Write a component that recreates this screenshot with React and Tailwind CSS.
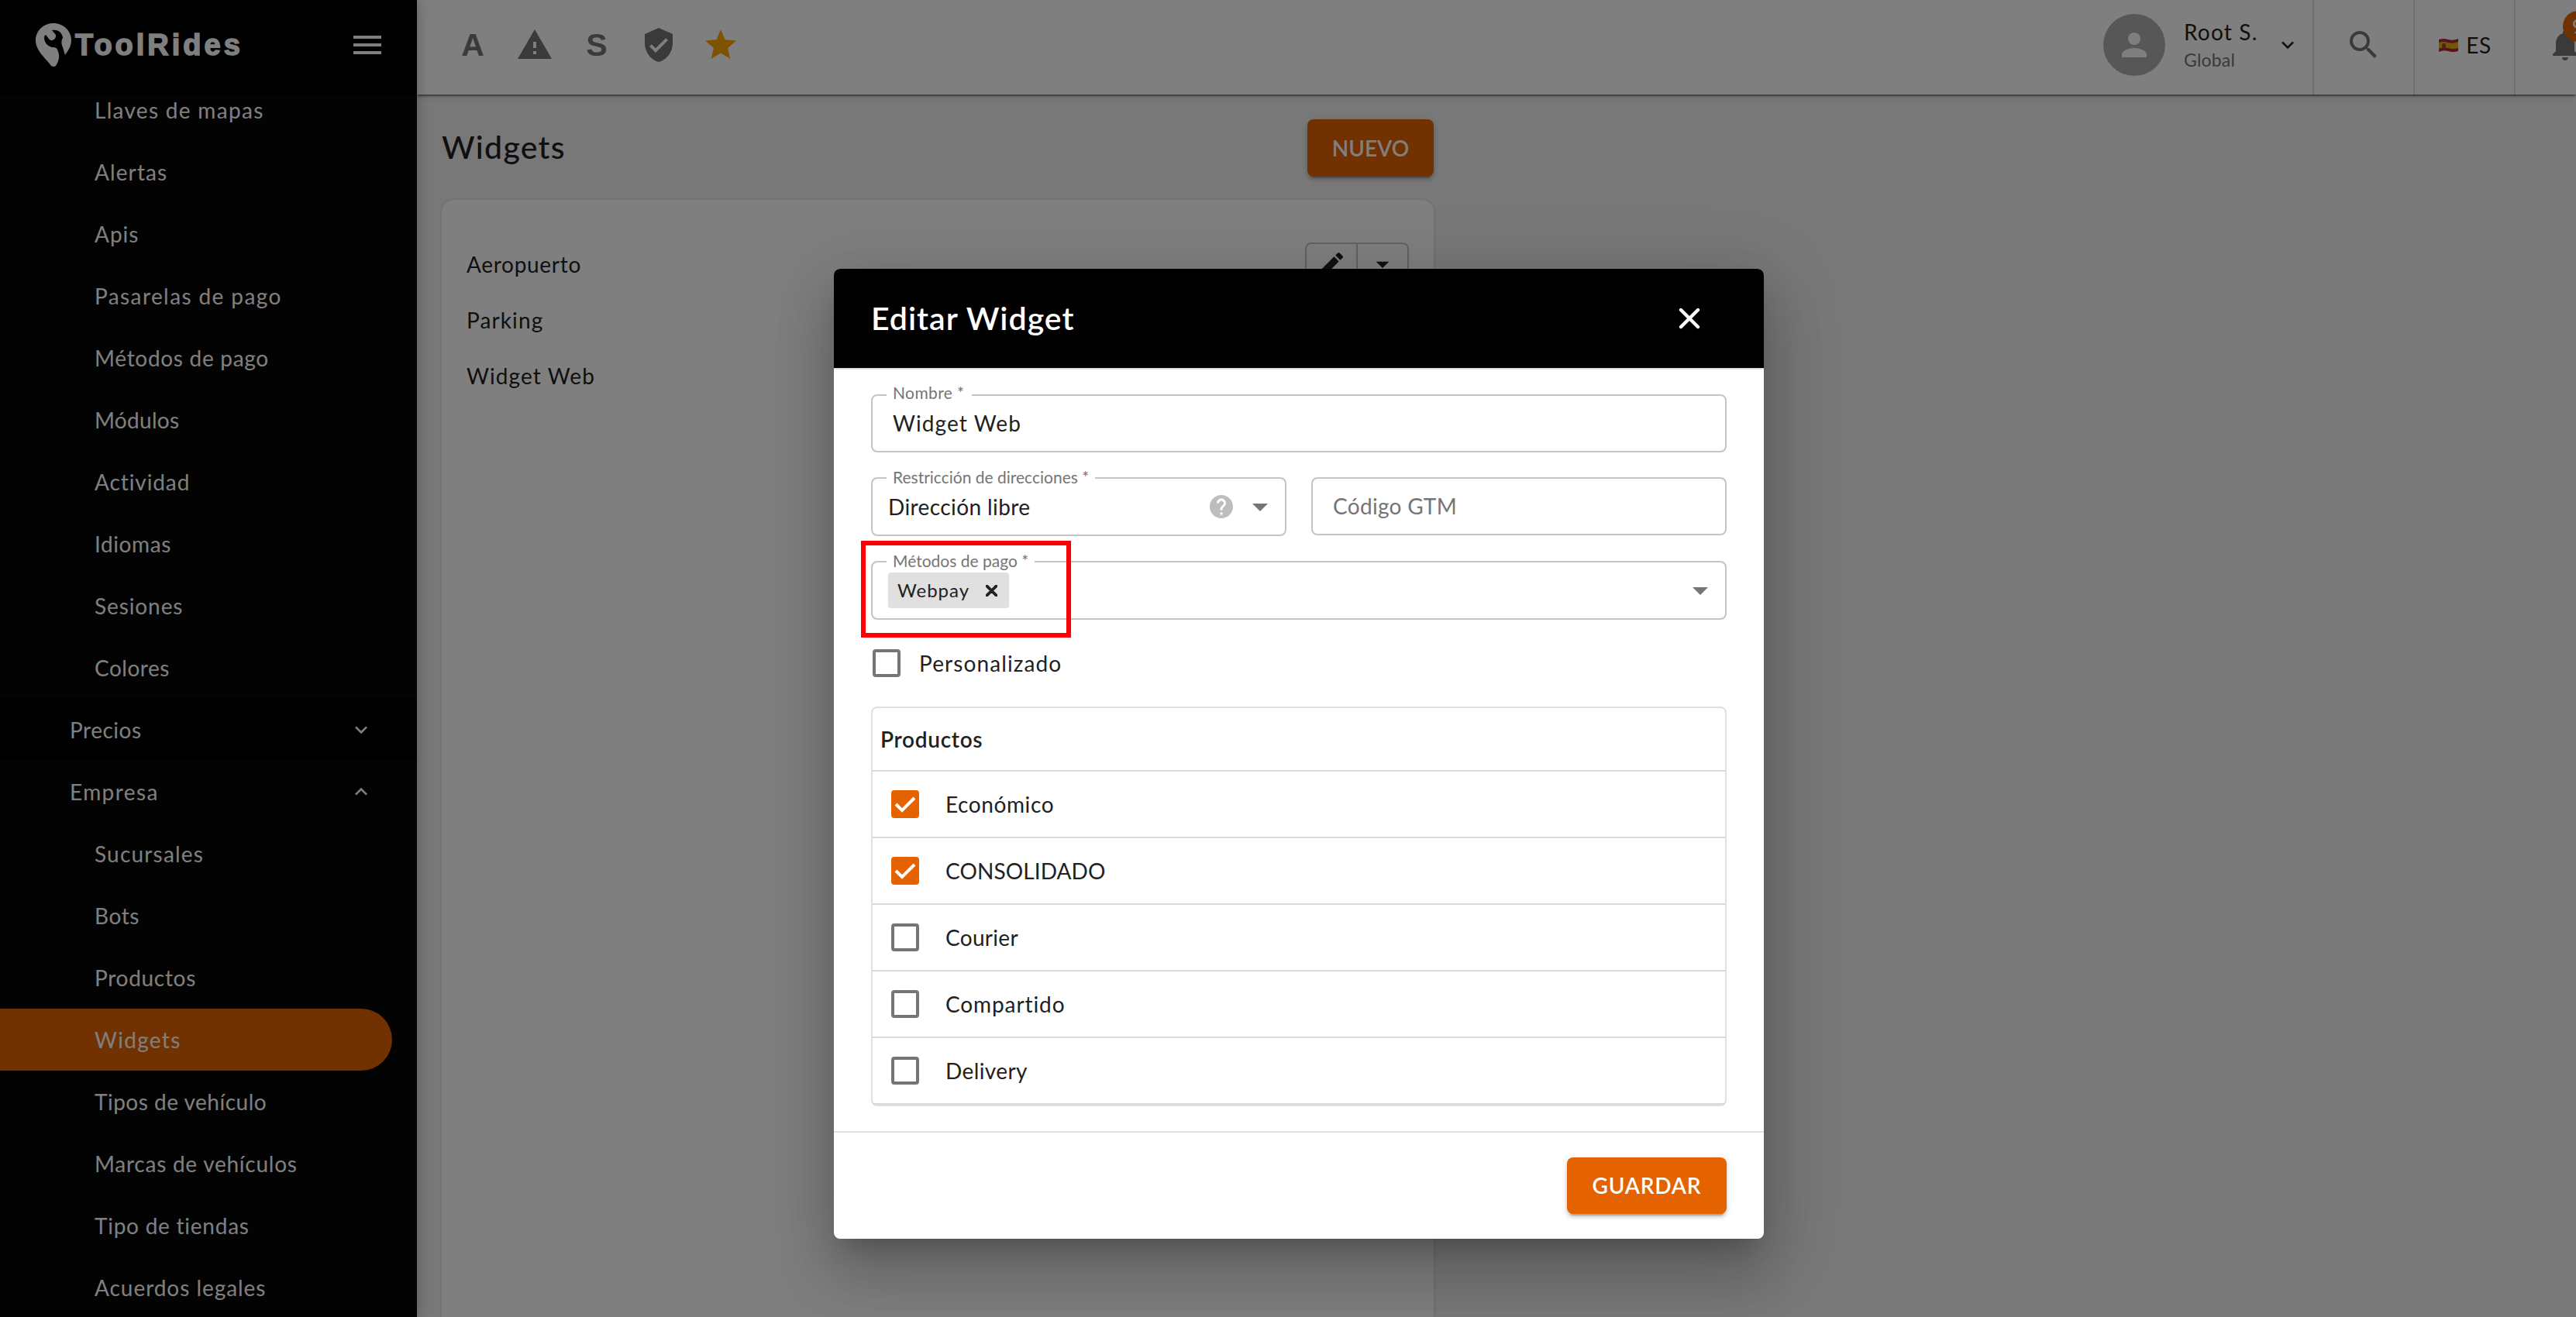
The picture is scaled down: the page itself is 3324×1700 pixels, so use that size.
import { useState } from 'react';
import {
  MdArrowDropDown,
  MdEdit,
  MdExpandLess,
  MdExpandMore,
  MdHelp,
  MdMenu,
  MdNotifications,
  MdPerson,
  MdSearch,
  MdStar,
  MdVerifiedUser,
  MdWarning,
} from 'react-icons/md';

const configItems = [
  { label: 'Llaves de mapas', spacing: 'tracking-[1.3px]' },
  { label: 'Alertas', spacing: 'tracking-[1.1px]' },
  { label: 'Apis', spacing: 'tracking-[1px]' },
  { label: 'Pasarelas de pago', spacing: 'tracking-[1.4px]' },
  { label: 'Métodos de pago', spacing: 'tracking-[0.7px]' },
  { label: 'Módulos', spacing: 'tracking-[0.3px]' },
  { label: 'Actividad', spacing: 'tracking-[0.9px]' },
  { label: 'Idiomas', spacing: 'tracking-[0.6px]' },
  { label: 'Sesiones', spacing: 'tracking-[0.9px]' },
  { label: 'Colores', spacing: 'tracking-[0.5px]' },
];

const companyItems = [
  { label: 'Sucursales', spacing: 'tracking-[1.2px]' },
  { label: 'Bots', spacing: 'tracking-[0.6px]' },
  { label: 'Productos', spacing: 'tracking-[0.7px]' },
  { label: 'Widgets', spacing: 'tracking-[1.3px]' },
  { label: 'Tipos de vehículo', spacing: 'tracking-[0.5px]' },
  { label: 'Marcas de vehículos', spacing: 'tracking-[0.75px]' },
  { label: 'Tipo de tiendas', spacing: 'tracking-[0.75px]' },
  { label: 'Acuerdos legales', spacing: 'tracking-[0.95px]' },
];

const widgets = [
  { name: 'Aeropuerto', spacing: 'tracking-[0.7px]' },
  { name: 'Parking', spacing: 'tracking-[1.1px]' },
  { name: 'Widget Web', spacing: 'tracking-[1.1px]' },
];

const initialProducts = [
  { name: 'Económico', checked: true, spacing: 'tracking-[0.6px]' },
  { name: 'CONSOLIDADO', checked: true, spacing: 'tracking-[0.1px]' },
  { name: 'Courier', checked: false, spacing: 'tracking-[0.3px]' },
  { name: 'Compartido', checked: false, spacing: 'tracking-[0.9px]' },
  { name: 'Delivery', checked: false, spacing: 'tracking-[0.4px]' },
];

function Logo() {
  return (
    <div className="flex items-center gap-[5px] text-white">
      <svg width="46" height="57" viewBox="0 0 46 57" fill="currentColor">
        <path d="M23 0C10 0 0 10 0 22c0 14 14 24 20 33q3 2 6 0c4-6 6-13 2-21-1-3-4-3-7-3-7-2-10-7-10-13 0-2 2-4 3-2l3 4c2 4 10 2 9-5l-5-6c9-2 14 5 14 10-3 5-1 10 0 12 1 3 2 7 3 10 4-6 8-11 8-19C46 10 36 0 23 0Z" />
      </svg>
      <span className="font-['Liberation_Sans'] text-[38px] leading-none font-bold tracking-[4px] [-webkit-text-stroke:1.5px_white]">
        ToolRides
      </span>
    </div>
  );
}

function NavItem({ label, spacing, active }) {
  return (
    <li
      className={`flex h-20 shrink-0 items-center pb-px pl-[122px] ${spacing} ${
        active ? 'mr-8 rounded-r-full bg-[#e46200]' : ''
      }`}
    >
      {label}
    </li>
  );
}

function Sidebar() {
  return (
    <aside className="z-10 flex w-[538px] shrink-0 flex-col bg-[#060606] text-white shadow-[0_0_16px_rgba(0,0,0,0.3)]">
      <div className="z-10 flex h-[122px] shrink-0 items-center justify-between bg-black pr-10 pb-1.5 pl-[46px]">
        <Logo />
        <MdMenu size={48} />
      </div>
      <ul className="-mt-5 flex flex-col text-[28px]">
        {configItems.map((item) => (
          <NavItem key={item.label} {...item} />
        ))}
        <li className="flex h-20 items-center justify-between bg-black pr-14 pl-[90px] tracking-[0.5px]">
          <span className="pb-px">Precios</span>
          <MdExpandMore size={32} />
        </li>
        <li className="flex h-20 items-center justify-between pr-14 pl-[90px] tracking-[1.4px]">
          <span className="pb-px">Empresa</span>
          <MdExpandLess size={32} />
        </li>
        {companyItems.map((item) => (
          <NavItem key={item.label} {...item} active={item.label === 'Widgets'} />
        ))}
      </ul>
    </aside>
  );
}

function SpainFlag() {
  return (
    <svg width="25" height="19" viewBox="0 0 25 19">
      <path d="M0 2q6-2 12 0t13-1v16q-7 2-13 0t-12 1Z" fill="#b0283a" />
      <path d="M0 6q6-2 12 0t13-1v8q-7 2-13 0t-12 1Z" fill="#e6b30c" />
      <rect x="4" y="7" width="5" height="6" rx="2" fill="#a34b2a" />
    </svg>
  );
}

function TopBar() {
  return (
    <header className="z-[5] flex h-[122px] shrink-0 justify-between bg-white text-[#757575] shadow-[0_4px_2px_-2px_rgba(0,0,0,0.3),0_2px_2px_rgba(0,0,0,0.2),0_2px_8px_rgba(0,0,0,0.14)]">
      <div className="flex items-center gap-8 pb-1.5 pl-12">
        <span className="w-12 text-center font-['Liberation_Sans'] text-[41px] leading-none font-bold">A</span>
        <MdWarning size={48} />
        <span className="w-12 text-center font-['Liberation_Sans'] text-[41px] leading-none font-bold">S</span>
        <MdVerifiedUser size={48} />
        <MdStar size={48} className="text-[#ffa400]" />
      </div>

      <div className="flex">
        <div className="flex items-center pr-4 pb-1.5">
          <div className="flex size-20 items-center justify-center rounded-full bg-[#afafaf] text-white">
            <MdPerson size={48} />
          </div>
          <div className="ml-6 flex w-[118px] flex-col">
            <span className="text-[28px] leading-[38px] tracking-[1.2px] text-[#212121]">Root S.</span>
            <span className="text-[23px] leading-[34px] tracking-[0.2px]">Global</span>
          </div>
          <MdExpandMore size={32} className="text-[#212121]" />
        </div>
        <div className="flex w-[130px] items-center justify-center border-l-2 border-[#e0e0e0] pb-1.5">
          <MdSearch size={48} />
        </div>
        <div className="flex w-[130px] items-center justify-center gap-2.5 border-l-2 border-[#e0e0e0] pb-1.5 pl-0.5 text-[28px] tracking-[0.5px] text-[#212121]">
          <SpainFlag />
          <span className="pb-px">ES</span>
        </div>
        <div className="w-20 overflow-hidden border-l-2 border-[#e0e0e0] pt-[34px] pl-10">
          <div className="relative size-12">
            <MdNotifications size={48} />
            <span className="absolute -top-5 left-[21px] flex h-10 items-center rounded-full bg-[#e46200] px-3 text-[24px] font-semibold text-white">
              99
            </span>
          </div>
        </div>
      </div>
    </header>
  );
}

function WidgetsPage() {
  return (
    <main className="flex w-[1312px] grow flex-col pt-8 pl-8">
      <div className="flex items-center justify-between">
        <h1 className="pb-0.5 text-[41px] font-medium tracking-[1.3px] text-[#212121]">Widgets</h1>
        <button className="h-[74px] w-[163px] rounded-lg bg-[#e46200] pb-px text-[28px] font-semibold text-white shadow-[0_6px_2px_-4px_rgba(0,0,0,0.2),0_4px_4px_rgba(0,0,0,0.14),0_2px_10px_rgba(0,0,0,0.12)]">
          NUEVO
        </button>
      </div>
      <div className="mt-[30px] grow rounded-t-2xl bg-white px-8 pt-[47px] shadow-[0_0_4px_rgba(0,0,0,0.15)]">
        {widgets.map(({ name, spacing }) => (
          <div key={name} className="flex h-[72px] items-center justify-between text-[28px] text-[#212121]">
            <span className={spacing}>{name}</span>
            <div className="flex h-[56px] w-[134px] rounded-lg border-2 border-[#c4c4c4]">
              <span className="flex grow basis-0 items-center justify-center border-r-2 border-[#c4c4c4]">
                <MdEdit size={40} />
              </span>
              <span className="flex grow basis-0 items-center justify-center">
                <MdArrowDropDown size={40} />
              </span>
            </div>
          </div>
        ))}
      </div>
    </main>
  );
}

function Checkbox({ checked, onChange }) {
  return (
    <button
      type="button"
      onClick={onChange}
      className={`flex size-9 items-center justify-center rounded-[4px] ${
        checked ? 'bg-[#e46200]' : 'border-4 border-[#757575]'
      }`}
    >
      {checked && (
        <svg width="28" height="22" viewBox="0 0 28 22" fill="none" stroke="white" strokeWidth="4">
          <path d="M2 11l8 8L26 3" />
        </svg>
      )}
    </button>
  );
}

function Outlined({ label, labelClass = '-top-4', className, children }) {
  return (
    <div className={`relative flex items-center rounded-lg border-2 border-[#c4c4c4] text-[28px] text-[#212121] ${className}`}>
      {label && (
        <span className={`absolute left-[18px] bg-white px-2 text-[21px] leading-7 text-[#757575] ${labelClass}`}>
          {label}
        </span>
      )}
      {children}
    </div>
  );
}

function CloseIcon({ size, stroke }) {
  return (
    <svg width={size} height={size} viewBox="0 0 28 28" fill="none" stroke="currentColor" strokeWidth={stroke} strokeLinecap="round">
      <path d="M3 3l22 22M25 3L3 25" />
    </svg>
  );
}

function EditWidgetModal() {
  const [products, setProducts] = useState(initialProducts);
  const [custom, setCustom] = useState(false);

  const toggle = (name) =>
    setProducts(products.map((p) => (p.name === name ? { ...p, checked: !p.checked } : p)));

  return (
    <div className="w-[1200px] overflow-hidden rounded-lg bg-white shadow-[0_22px_30px_-14px_rgba(0,0,0,0.2),0_48px_76px_6px_rgba(0,0,0,0.14),0_18px_92px_16px_rgba(0,0,0,0.12)]">
      {/* Header */}
      <div className="flex h-[130px] items-center justify-between border-b-2 border-[#e0e0e0] bg-black pr-[82px] pl-12 text-white">
        <h2 className="text-[41px] font-semibold tracking-[1px]">Editar Widget</h2>
        <CloseIcon size={28} stroke={4.4} />
      </div>

      {/* Form */}
      <div className="flex flex-col gap-8 px-12 py-8">
        <Outlined label="Nombre *" labelClass="-top-[18px] pr-2.5 tracking-[0.4px]" className="h-[75px] pb-px pl-[26px] tracking-[1.1px]">
          Widget Web
        </Outlined>

        <div className="flex items-start gap-8">
          <Outlined label="Restricción de direcciones *" className="h-[76px] w-[536px] justify-between pr-2 pl-5">
            <span className="pb-px tracking-[0.4px]">Dirección libre</span>
            <span className="flex items-center gap-2">
              <MdHelp size={36} className="text-[#bdbdbd]" />
              <MdArrowDropDown size={48} className="text-[#757575]" />
            </span>
          </Outlined>
          <Outlined className="h-[75px] w-[536px] pl-[26px]">
            <span className="pb-px tracking-[0.3px] text-[#757575]">Código GTM</span>
          </Outlined>
        </div>

        <Outlined label="Métodos de pago *" className="h-[76px] justify-between pr-2 pl-5">
          <span className="flex h-[46px] w-[156px] items-center justify-between rounded-[4px] bg-[#e0e0e0] pr-[15px] pl-3 text-[24px]">
            <span className="pb-px tracking-[1px]">Webpay</span>
            <CloseIcon size={15} stroke={7} />
          </span>
          <MdArrowDropDown size={48} className="text-[#757575]" />
          {/* Highlight around the payment method */}
          <span className="absolute -top-7 -left-[15px] h-[125px] w-[271px] border-[6px] border-[#ff0000]" />
        </Outlined>

        <label className="flex h-12 items-center gap-6 pl-0.5 text-[28px] text-[#212121]">
          <Checkbox checked={custom} onChange={() => setCustom(!custom)} />
          <span className="pb-px tracking-[1.1px]">Personalizado</span>
        </label>

        <div className="rounded-lg border-2 border-[#e0e0e0] text-[28px] text-[#212121]">
          <div className="flex h-[82px] items-center border-b-2 border-[#d9d9d9] pb-px pl-2.5 font-semibold tracking-[0.7px]">
            Productos
          </div>
          {products.map((p) => (
            <div key={p.name} className="flex h-[86px] items-center gap-[34px] border-b-2 border-[#d9d9d9] pl-6">
              <Checkbox checked={p.checked} onChange={() => toggle(p.name)} />
              <span className={`pb-px ${p.spacing}`}>{p.name}</span>
            </div>
          ))}
        </div>
      </div>

      {/* Footer */}
      <div className="flex justify-end border-t-2 border-[#e0e0e0] px-12 py-8">
        <button className="h-[73px] w-[206px] rounded-lg bg-[#e46200] pb-px text-[28px] font-semibold tracking-[0.8px] text-white shadow-[0_6px_2px_-4px_rgba(0,0,0,0.2),0_4px_4px_rgba(0,0,0,0.14),0_2px_10px_rgba(0,0,0,0.12)]">
          GUARDAR
        </button>
      </div>
    </div>
  );
}

function App() {
  return (
    <div className="relative flex h-[1700px] w-[3324px] overflow-hidden bg-[#f0f0f0] font-['Lato',sans-serif]">
      <Sidebar />
      <div className="flex w-[2786px] flex-col">
        <TopBar />
        <WidgetsPage />
      </div>
      <div className="absolute inset-0 z-20 flex items-start bg-black/50 pt-[347px] pl-[1076px]">
        <EditWidgetModal />
      </div>
    </div>
  );
}

export default App;
